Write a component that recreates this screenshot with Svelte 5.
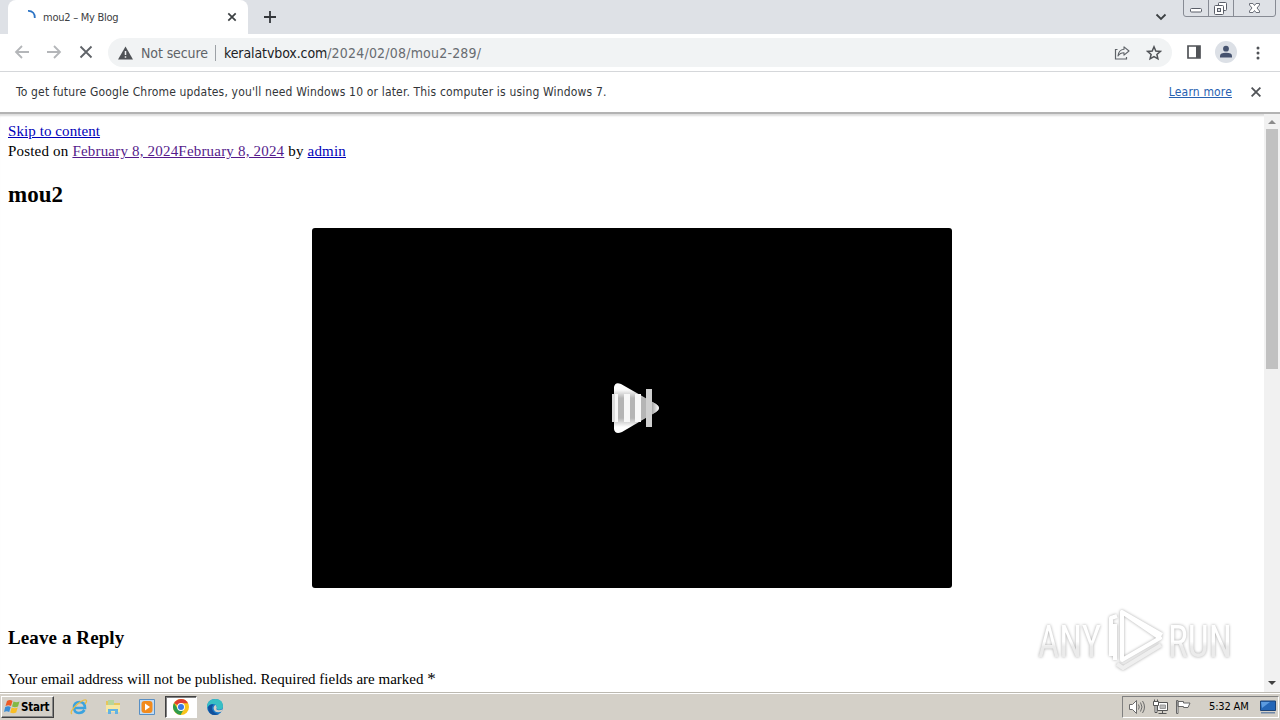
<script lang="ts">
  const tab = { title: 'mou2 – My Blog' };
  const url = { host: 'keralatvbox.com', path: '/2024/02/08/mou2-289/' };
  const clock = '5:32 AM';
</script>

<div class="screen">
  <header class="tab-strip">
    <div class="tab">
      <svg class="spinner" width="16" height="16" viewBox="0 0 16 16">
        <path d="M7 1.8C11.500 1.600 14.200 4.800 13.800 9" fill="none" stroke="#2b73c4" stroke-width="1.8" />
      </svg>
      <span class="tab-title">{tab.title}</span>
      <svg class="tab-close" width="10" height="10" viewBox="0 0 10 10">
        <path d="M1.300 1.300l7.400 7.400M8.700 1.300L1.300 8.700" stroke="#3c4043" stroke-width="1.7" />
      </svg>
    </div>
    <svg class="new-tab" width="14" height="14" viewBox="0 0 14 14">
      <path d="M7 1v12M1 7h12" stroke="#34373b" stroke-width="1.8" />
    </svg>
    <svg class="tab-search" width="12" height="8" viewBox="0 0 12 8">
      <path d="M1.500 1.500L6 6l4.500-4.500" fill="none" stroke="#3c4043" stroke-width="1.8" />
    </svg>
    <svg class="window-buttons" width="94" height="18" viewBox="0 0 94 18">
      <path d="M.5 0v14q0 2.500 2.500 2.500h87q2.500 0 2.500-2.500V0M25.500 0v16M50.500 0v16" fill="none" stroke="#878b94" />
      <rect x="7.500" y="8.500" width="11" height="3.500" rx="1" fill="#fff" stroke="#5a5e68" />
      <rect x="35.500" y="2.500" width="8" height="8" rx="1" fill="#fff" stroke="#5a5e68" />
      <rect x="31.500" y="5.500" width="9" height="9" rx="1" fill="#fff" stroke="#5a5e68" />
      <rect x="34.500" y="8.500" width="3" height="3" fill="#dee1e6" stroke="#5a5e68" />
      <path d="M66.500 3.500h3.500l1.500 2 1.500-2h3.500v1.500L74 8l2.500 3v1.500H73l-1.500-2-1.500 2h-3.500V11L69 8l-2.500-3z" fill="#fff" stroke="#6b6f79" />
    </svg>
  </header>

  <nav class="toolbar">
    <svg class="nav-icon" width="16" height="16" viewBox="0 0 16 16">
      <path d="M15 8H2M8 2L2 8l6 6" fill="none" stroke="#b4b6b9" stroke-width="1.8" />
    </svg>
    <svg class="nav-icon" width="16" height="16" viewBox="0 0 16 16">
      <path d="M1 8h13M8 2l6 6-6 6" fill="none" stroke="#b4b6b9" stroke-width="1.8" />
    </svg>
    <svg class="nav-icon" width="16" height="16" viewBox="0 0 16 16">
      <path d="M2.500 2.500l11 11M13.500 2.500l-11 11" stroke="#5f6368" stroke-width="1.8" />
    </svg>
    <div class="address">
      <svg width="15" height="14" viewBox="0 0 15 14">
        <path d="M7.500.500L15 13.500H0z" fill="#505357" />
        <path d="M7.500 5v4M7.500 10.200v1.600" stroke="#f1f3f4" stroke-width="1.5" />
      </svg>
      <span class="not-secure">Not secure</span>
      <span class="divider"></span>
      <span class="host">{url.host}</span><span class="path">{url.path}</span>
      <svg class="share" width="16" height="16" viewBox="0 0 16 16">
        <path d="M3.500 4.500h-2v9.500h11v-2" fill="none" stroke="#5f6368" stroke-width="1.200" />
        <path d="M10 1.800l5 4.200-5 4.200V7.800Q6 7.800 4 11 4.500 4.800 10 4.200z" fill="none" stroke="#5f6368" stroke-width="1.100" stroke-linejoin="round" />
      </svg>
      <svg class="star" width="16" height="16" viewBox="0 0 16 16">
        <path d="M8 1.800l1.800 4.200 4.500.4-3.400 3 1 4.400L8 11.500l-3.900 2.300 1-4.400-3.400-3 4.500-.4z" fill="none" stroke="#505357" stroke-width="1.500" />
      </svg>
    </div>
    <svg class="side-panel" width="14" height="14" viewBox="0 0 14 14">
      <path d="M1 1h12v12H1z" fill="none" stroke="#505357" stroke-width="1.700" />
      <path d="M9 1h4v12H9z" fill="#505357" />
    </svg>
    <svg class="avatar" width="22" height="22" viewBox="0 0 22 22">
      <circle cx="11" cy="11" r="11" fill="#dce0e6" />
      <circle cx="11" cy="7.700" r="2.900" fill="#46536f" />
      <path d="M5 16.500v-1.700q0-3 6-3t6 3v1.700z" fill="#46536f" />
    </svg>
    <svg class="menu" width="4" height="14" viewBox="0 0 4 14" fill="#505357">
      <circle cx="2" cy="2" r="1.500" /><circle cx="2" cy="7" r="1.500" /><circle cx="2" cy="12" r="1.500" />
    </svg>
  </nav>

  <div class="infobar">
    <span class="notice">To get future Google Chrome updates, you'll need Windows 10 or later. This computer is using Windows 7.</span>
    <span class="learn-more">Learn more</span>
    <svg width="10" height="10" viewBox="0 0 10 10">
      <path d="M.6.600l8.800 8.800M9.400.600L.6 9.400" stroke="#505357" stroke-width="1.800" />
    </svg>
  </div>

  <div class="viewport">
    <main>
      <div class="skip"><span class="link">Skip to content</span></div>
      <div class="meta">Posted on <span class="link visited">February 8, 2024February 8, 2024</span> by <span class="link">admin</span></div>
      <h1>mou2</h1>
      <div class="video">
        <svg width="50" height="54" viewBox="0 0 50 54">
          <defs>
            <linearGradient id="play" x1="0" y1="0" x2="0" y2="1">
              <stop offset="0" stop-color="#fff" />
              <stop offset=".12" stop-color="#fff" />
              <stop offset=".3" stop-color="#b5b5b5" />
              <stop offset=".7" stop-color="#b5b5b5" />
              <stop offset=".88" stop-color="#fff" />
            </linearGradient>
            <linearGradient id="tip">
              <stop offset="0" stop-color="#999" />
              <stop offset="1" stop-color="#fff" />
            </linearGradient>
          </defs>
          <path d="M4 6Q5 .500 11 3L46 23Q52 27 46 31L12 51Q5 54 4 48z" fill="url(#play)" />
          <path d="M41 20.200L46 23Q52 27 46 31L41 33.900z" fill="url(#tip)" />
          <path d="M2 13h6v28H2zM14 13h6v28h-6zM25 13h6v28h-6z" fill="#f8f8f8" />
          <path d="M2 13h3v28H2z" fill="#dcdcdc" />
          <path d="M36 8h6v38h-6z" fill="#cfcfcf" />
        </svg>
      </div>
      <h3>Leave a Reply</h3>
      <p>Your email address will not be published. Required fields are marked <span class="required">*</span></p>
    </main>

    <aside class="scrollbar">
      <svg width="16" height="14" viewBox="0 0 16 14"><path d="M4 10l4-4 4 4z" fill="#8a8a8a" /></svg>
      <div class="thumb"></div>
      <svg class="down" width="16" height="17" viewBox="0 0 16 17"><path d="M4 6l4 4 4-4z" fill="#404040" /></svg>
    </aside>

    <svg class="watermark" width="220" height="76" viewBox="0 0 220 76">
      <defs>
        <linearGradient id="mark" x1="0" y1="0" x2="0" y2="1">
          <stop offset=".5" stop-color="#fff" />
          <stop offset=".6" stop-color="#ebebeb" />
        </linearGradient>
      </defs>
      <g class="mark">
        <text x="8" y="54" textLength="63" lengthAdjust="spacingAndGlyphs">ANY</text>
        <text x="138" y="54" textLength="64" lengthAdjust="spacingAndGlyphs">RUN</text>
        <path d="M81 53V15l6-2M92 9v48l38-22zM85 21v36M92 9l40 23" />
        <path class="shade" d="M87 61l6 4 38-23" />
      </g>
    </svg>
  </div>

  <footer class="taskbar">
    <div class="start">
      <svg width="16" height="16" viewBox="0 0 16 16">
        <path d="M3 2q3-2 5.500 0L7 7Q4.500 5.500 1.500 7z" fill="#ee5a24" />
        <path d="M9.500 2.500q3 1.500 6 0L14 7.500q-3 1.500-6 0z" fill="#83b944" />
        <path d="M1.200 8q3-1.500 5.500 0l-1.500 5q-2.500-1.500-5.200 0z" fill="#3b8dd5" />
        <path d="M7.700 8.500q3 1.500 6 0l-1.500 5q-3 1.500-6 0z" fill="#f9be25" />
      </svg>
      <span>Start</span>
    </div>

    <div class="task">
      <svg width="18" height="18" viewBox="0 0 18 18">
        <path d="M14.500 12Q12.500 15 9 15 4 15 4 9.500T9.500 4Q15 4 15 10H5" fill="none" stroke="#3ba3df" stroke-width="2.600" />
        <path d="M2 16Q-1 14 7 6.500 15 0 16.500 2.500 17 4 15 6" fill="none" stroke="#e9bd45" stroke-width="1.300" />
      </svg>
    </div>
    <div class="task">
      <svg width="18" height="18" viewBox="0 0 18 18">
        <path d="M2 3h5l1 2h8v9H2z" fill="#e6c65c" />
        <path d="M4 2h6v5H4z" fill="#b6d59c" />
        <path d="M2 7h14v7H2z" fill="#f6e7a2" />
        <path d="M4 16v-5h10v5h-3v-3H7v3z" fill="#62b3e3" />
      </svg>
    </div>
    <div class="task">
      <svg width="18" height="18" viewBox="0 0 18 18">
        <path d="M1.500 1.500h15v15h-15z" fill="#c2dcf4" stroke="#588fc4" />
        <rect x="3.500" y="3" width="11" height="12" rx="3" fill="#f28b1d" />
        <path d="M7 5.500l5 3.500-5 3.500z" fill="#fff" />
      </svg>
    </div>
    <div class="task active">
      <svg width="16" height="16" viewBox="0 0 16 16">
        <circle cx="8" cy="8" r="8" fill="#f9c41b" />
        <path d="M8 8L1 4Q4 0 8 0q5 0 7 4.300H8z" fill="#df3f32" />
        <path d="M1 4Q-1.500 9 2 13q2.500 3 5.500 3L11 10 8 8 4.500 9.500z" fill="#2f9c4c" />
        <circle cx="8" cy="8" r="3.900" fill="#fff" />
        <circle cx="8" cy="8" r="3" fill="#3979e5" />
      </svg>
    </div>
    <div class="task">
      <svg width="18" height="18" viewBox="0 0 18 18">
        <circle cx="9" cy="9" r="8" fill="#1979c9" />
        <path d="M1 8Q2 1 9.500 1T17 8.500q0 3-4 3.200-3 0-2-1.900Q11 6 7 6 3 6 1 10z" fill="#38bfc4" />
        <path d="M10.800 9.800q-1.500 2 2 2.500 2 0 4-1l-1.300 2.500Q8 15.500 7.500 10 8 7 10 7z" fill="#d4d0c8" />
        <path d="M2 9Q4 5.500 7.500 6.500 4.500 9.500 7 13q2 3 6 3-5 2.500-9-.8Q2 13 2 9z" fill="#12509b" />
      </svg>
    </div>

    <div class="tray">
      <svg width="18" height="16" viewBox="0 0 18 16" fill="none" stroke="#6b6b6b">
        <path d="M1.500 5.500h3l4-4v13l-4-4h-3z" fill="#fff" />
        <path d="M10.500 5.500q1.500 2.500 0 5M12.500 3.500q3 4.500 0 9M14.500 2q4 6 0 12" />
      </svg>
      <svg width="17" height="16" viewBox="0 0 17 16" stroke="#555">
        <path d="M5.500 3.500h10v8h-10z" fill="#fff" />
        <path d="M8 6h5.500v3.500H8z" fill="#bbb" stroke="#999" />
        <path d="M6.500 14.500h8M10.500 12v2" fill="none" />
        <path d="M1.500 2.500h5v4h-5zM2.500.500v2M5.500.500v2M3 6.500h2v7H3z" fill="#fff" />
      </svg>
      <svg width="17" height="16" viewBox="0 0 17 16" fill="#fff" stroke="#666">
        <path d="M1.500 1.500h1.500v13H1.500zM3 2.500h5.500V4h6.500l-2 4.500H8.500v-1H3z" />
      </svg>
      <span class="clock">{clock}</span>
      <svg class="desktop" width="16" height="14" viewBox="0 0 16 14">
        <path d="M.5 1h15v9.500H.500z" fill="#2466b7" stroke="#1c4377" />
        <path d="M1 2h9L2 8z" fill="#5c9be0" />
        <path d="M1 12h14v1.500H1z" fill="#6e87a7" />
      </svg>
    </div>
  </footer>
</div>

<style>
  :global(body) {
    margin: 0;
    overflow: hidden;
  }

  .screen {
    display: flex;
    flex-direction: column;
    width: 1280px;
    height: 720px;
    overflow: hidden;
    background: #fff;
    font-family: Tahoma, 'DejaVu Sans Condensed', 'DejaVu Sans', sans-serif;
    font-stretch: condensed;
    white-space: nowrap;
  }

  svg {
    flex: none;
    display: block;
  }

  .tab-strip {
    display: flex;
    height: 34px;
    padding-left: 8px;
    background: #dee1e6;
  }

  .tab {
    display: flex;
    align-items: center;
    box-sizing: border-box;
    width: 240px;
    padding: 0 11px 0 13px;
    border-radius: 8px 8px 0 0;
    background: #fff;
  }

  .tab-title {
    flex: 1;
    margin-left: 6px;
    font-size: 11px;
    letter-spacing: -0.25px;
    color: #3c4043;
  }

  .new-tab {
    margin: 10px 0 0 15px;
  }

  .tab-search {
    margin: 13px 16px 0 auto;
  }

  .window-buttons {
    margin-right: 3px;
  }

  .toolbar {
    display: flex;
    align-items: center;
    height: 37px;
    padding-left: 14px;
    border-bottom: 1px solid #d5d7da;
  }

  .nav-icon {
    margin: -1px 16px 0 0;
  }

  .address {
    display: flex;
    align-items: center;
    box-sizing: border-box;
    width: 1064px;
    height: 29px;
    margin-left: -2px;
    padding: 0 10px;
    border-radius: 15px;
    background: #f1f3f4;
    font-size: 14px;
  }

  .not-secure {
    width: 67px;
    margin-left: 8px;
    letter-spacing: -0.1px;
    color: #5f6368;
  }

  .divider {
    width: 1px;
    height: 16px;
    margin: 0 8px 0 7px;
    background: #9da1a6;
  }

  .host {
    letter-spacing: -0.1px;
    color: #202124;
  }

  .path {
    letter-spacing: 0.2px;
    color: #686c71;
  }

  .share {
    margin-left: auto;
  }

  .star {
    margin-left: 16px;
  }

  .side-panel {
    margin: -1px 0 0 15px;
  }

  .avatar {
    margin: -1px 0 0 14px;
  }

  .menu {
    margin-left: 19px;
  }

  .infobar {
    display: flex;
    align-items: center;
    height: 40px;
    padding: 0 19px 0 16px;
    border-bottom: 2px solid #b3b3b3;
    font-size: 12px;
    letter-spacing: 0.165px;
    color: #333639;
  }

  .learn-more {
    margin: 0 19px 0 auto;
    color: #2861b1;
    text-decoration: underline;
  }

  .viewport {
    position: relative;
    display: flex;
    height: 578px;
    font-family: 'Liberation Serif', 'Times New Roman', serif;
    font-size: 15px;
    line-height: 20px;
    color: #000;
    box-shadow: inset 0 3px 2px -1px #ddd;
  }

  main {
    box-sizing: border-box;
    width: 1264px;
    padding: 7px 8px 0;
  }

  .link {
    color: #0000b8;
    text-decoration: underline;
  }

  .visited {
    color: #551a8b;
  }

  .skip {
    letter-spacing: 0.08px;
  }

  .meta {
    letter-spacing: 0.19px;
  }

  h1 {
    margin: 20px 0;
    font-size: 23px;
    line-height: 27px;
  }

  .video {
    display: flex;
    align-items: center;
    justify-content: center;
    width: 640px;
    height: 360px;
    margin: 0 auto;
    border-radius: 3px;
    background: #000;
  }

  .video svg {
    margin-left: 6px;
  }

  h3 {
    margin: 39px 0 0;
    font-size: 19px;
    line-height: 22px;
    letter-spacing: 0.1px;
  }

  p {
    margin: 20px 0 0;
  }

  .required {
    font-size: 17px;
    line-height: 1;
  }

  .scrollbar {
    display: flex;
    flex-direction: column;
    width: 16px;
    background: #f1f1f1;
  }

  .thumb {
    width: 12px;
    height: 240px;
    margin: 1px 2px;
    background: #c1c1c1;
  }

  .down {
    margin-top: auto;
  }

  .watermark {
    position: absolute;
    right: 30px;
    bottom: 13px;
  }

  .mark {
    fill: none;
    stroke: #fff;
    stroke-width: 4;
    stroke-linejoin: round;
    filter: drop-shadow(0 0 1.5px #aaa);
  }

  .mark text {
    font-family: Roboto, sans-serif;
    font-size: 45px;
    fill: url(#mark);
    stroke: none;
  }

  .shade {
    stroke: #efefef;
  }

  .taskbar {
    display: flex;
    align-items: center;
    box-sizing: border-box;
    height: 28px;
    padding: 0 1px;
    border-top: 1px solid #bcb9b1;
    box-shadow: inset 0 1px #fff;
    background: #d4d0c8;
  }

  .start {
    display: flex;
    align-items: center;
    gap: 1px;
    box-sizing: border-box;
    width: 53px;
    height: 22px;
    margin-right: 9px;
    padding-left: 2px;
    border: 1px solid;
    border-color: #fff #404040 #404040 #fff;
    box-shadow: inset -1px -1px #888;
    font-size: 11.5px;
    font-weight: bold;
    letter-spacing: -0.25px;
  }

  .task {
    display: flex;
    align-items: center;
    justify-content: center;
    box-sizing: border-box;
    width: 32px;
    height: 22px;
    margin-right: 2px;
  }

  .active {
    border: 1px solid;
    border-color: #404040 #fff #fff #404040;
    background: #fff;
    box-shadow: inset 1px 1px #808080;
  }

  .tray {
    display: flex;
    align-items: center;
    gap: 6px;
    box-sizing: border-box;
    width: 157px;
    height: 22px;
    margin-left: auto;
    padding-left: 5px;
    border: 1px solid;
    border-color: #808080 #fff #fff #808080;
  }

  .clock {
    width: 42px;
    margin-left: 11px;
    font-size: 11px;
    letter-spacing: -0.15px;
  }

  .desktop {
    margin-left: 3px;
  }
</style>
